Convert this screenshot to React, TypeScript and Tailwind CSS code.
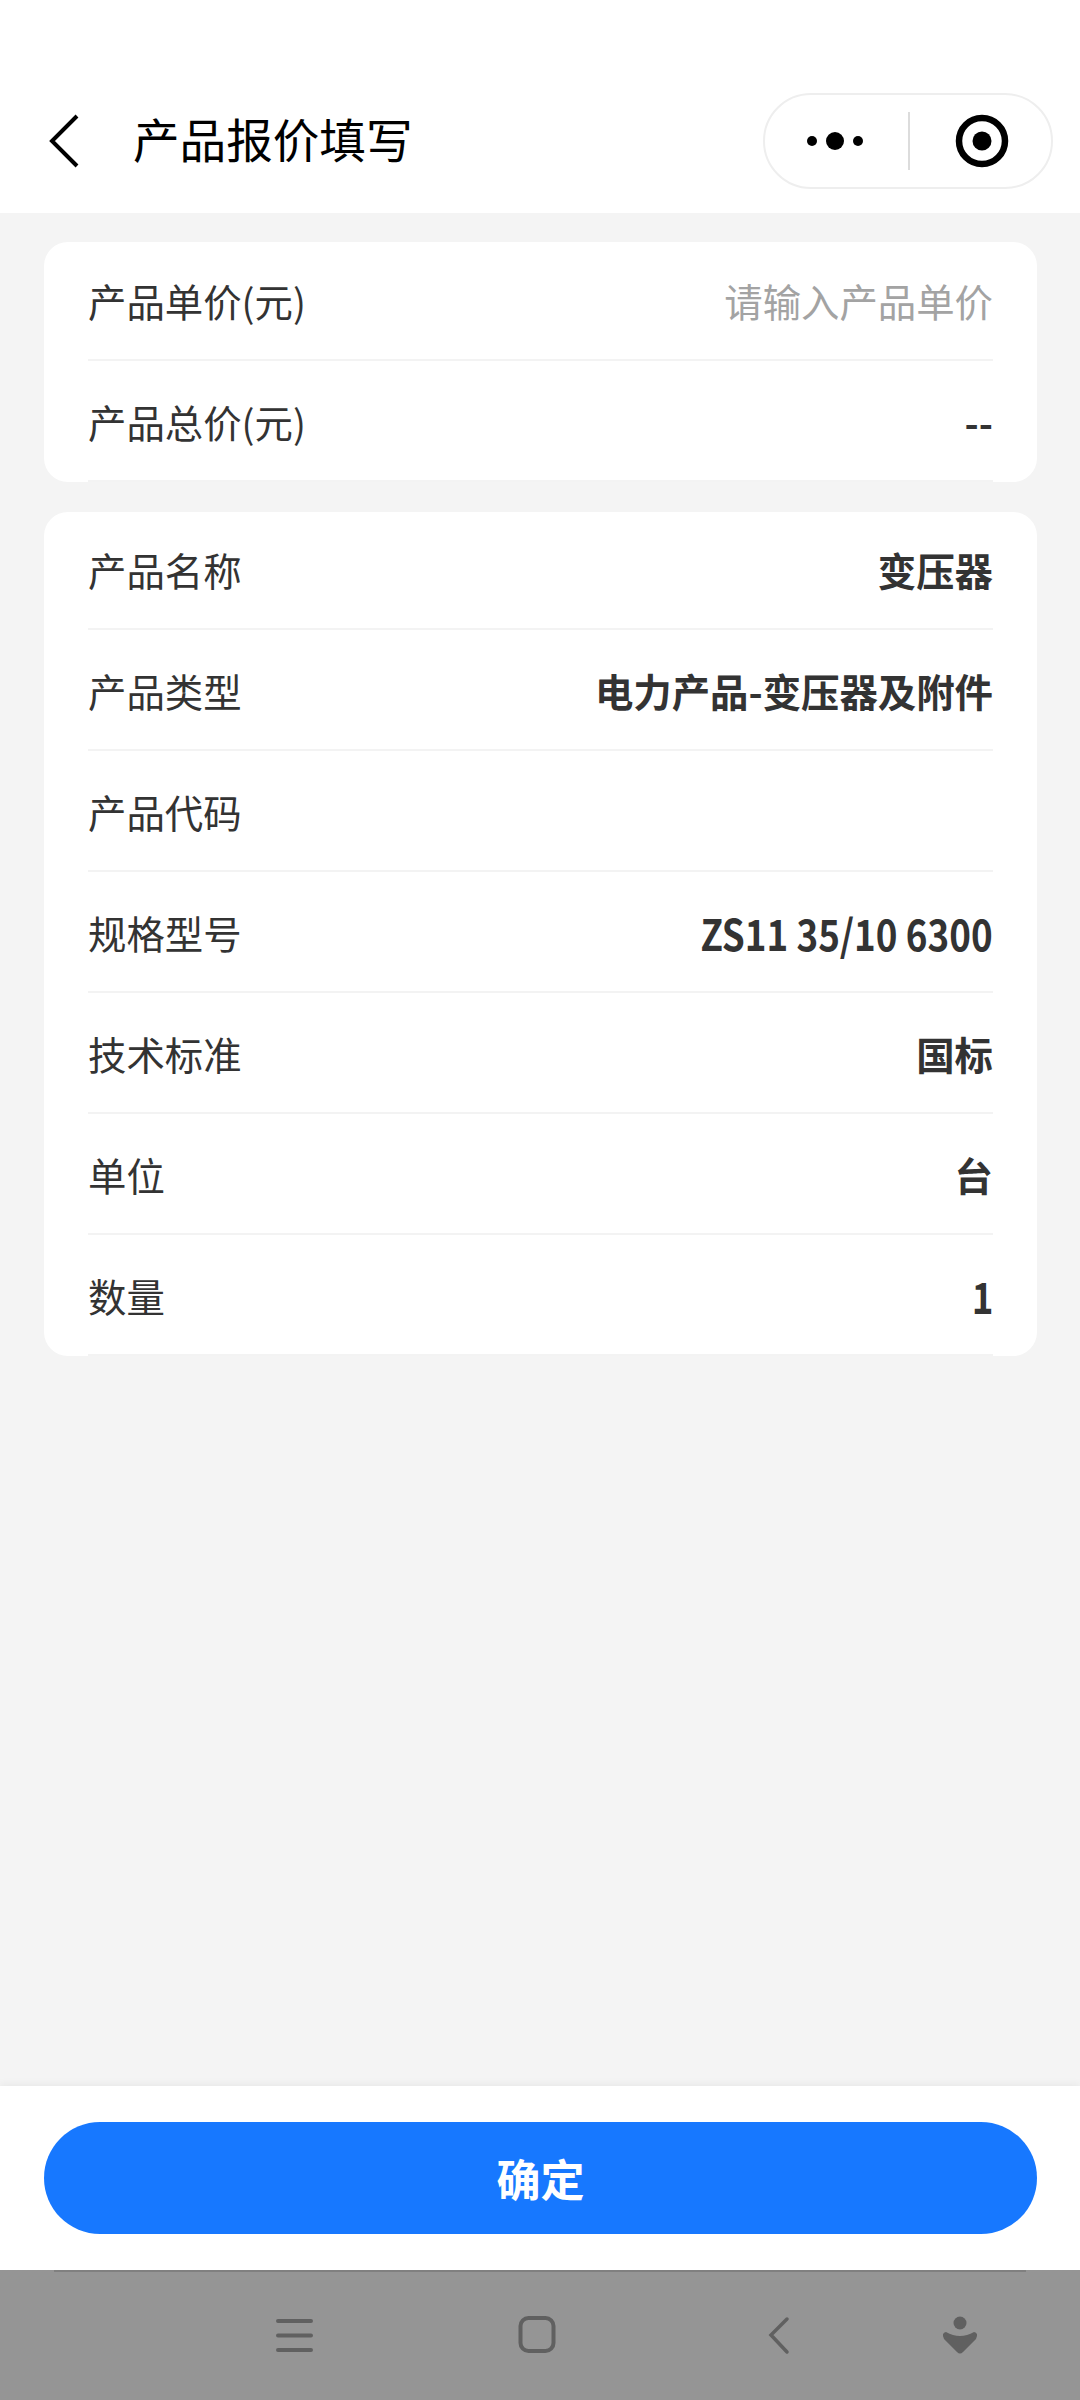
const font = { fontFamily: '"Noto Sans CJK SC", sans-serif' };

type RowProps = { label: string; value?: string; placeholder?: string; latin?: boolean };

function Row({ label, value, placeholder, latin }: RowProps) {
  return (
    <div className="flex items-end justify-between h-full border-b-2 border-[#f3f3f3] mx-[44px] pb-[40px] text-[38.4px] text-[#333333]">
      <span className="leading-[38px]">{label}</span>
      {placeholder ? (
        <span className="leading-[38px] text-[#a3a3a3]">{placeholder}</span>
      ) : latin ? (
        <span className="inline-block leading-[38px] font-bold text-[43px] origin-right scale-x-[0.855] whitespace-nowrap">
          {value}
        </span>
      ) : (
        <span className="leading-[38px] font-bold">{value}</span>
      )}
    </div>
  );
}

export default function App() {
  const first: RowProps[] = [
    { label: "产品单价(元)", placeholder: "请输入产品单价" },
    { label: "产品总价(元)", value: "--" },
  ];
  const second: RowProps[] = [
    { label: "产品名称", value: "变压器" },
    { label: "产品类型", value: "电力产品-变压器及附件" },
    { label: "产品代码", value: "" },
    { label: "规格型号", value: "ZS11 35/10 6300", latin: true },
    { label: "技术标准", value: "国标" },
    { label: "单位", value: "台" },
    { label: "数量", value: "1", latin: true },
  ];
  return (
    <div className="w-[1080px] h-[2400px] flex flex-col bg-[#f4f4f4] overflow-hidden" style={font}>
      <header className="h-[213px] shrink-0 bg-white flex items-start justify-between pt-[93px] pr-[27px] pl-[44px]">
        <div className="flex items-center h-[96px]">
          <svg width="36" height="56" viewBox="0 0 36 56" className="shrink-0">
            <path d="M33 3 L8 28 L33 53" fill="none" stroke="#000" strokeWidth="4" />
          </svg>
          <span className="ml-[53px] pb-[6px] text-[46.6px] text-black leading-none">产品报价填写</span>
        </div>
        <div className="w-[290px] h-[96px] rounded-full border-2 border-[#eeeeee] flex items-center">
          <svg width="143" height="40" viewBox="0 0 143 40" className="shrink-0">
            <circle cx="47" cy="20" r="5" fill="#000" />
            <circle cx="70" cy="20" r="9" fill="#000" />
            <circle cx="93" cy="20" r="5" fill="#000" />
          </svg>
          <div className="w-[2px] h-[58px] bg-[#dcdcdc] shrink-0" />
          <svg width="146" height="56" viewBox="0 0 146 56" className="shrink-0">
            <circle cx="72" cy="28" r="23" fill="none" stroke="#000" strokeWidth="6.5" />
            <circle cx="72" cy="28" r="9.5" fill="#000" />
          </svg>
        </div>
      </header>

      <main className="flex-1 pl-[44px] pr-[43px] pt-[29px] flex flex-col gap-[30px]">
        <section className="h-[240px] bg-white rounded-[24px] grid grid-rows-[119px_121px] overflow-hidden">
          {first.map((r) => (
            <Row key={r.label} {...r} />
          ))}
        </section>
        <section className="h-[844px] bg-white rounded-[24px] grid grid-rows-[118px_repeat(6,121px)] overflow-hidden">
          {second.map((r) => (
            <Row key={r.label} {...r} />
          ))}
        </section>
      </main>

      <footer className="h-[184px] shrink-0 bg-white pl-[44px] pr-[43px] pt-[36px] shadow-[0_-2px_8px_rgba(0,0,0,0.05)]">
        <button className="w-full h-[112px] rounded-full bg-[#1778ff] text-white text-[44px] font-bold leading-none">
          确定
        </button>
      </footer>

      <nav className="h-[130px] shrink-0 bg-[#959595] relative">
        <div className="h-[2px] mx-[54px] bg-[#808080]" />
        <div className="flex items-center h-[128px] -mt-[2px]">
          <svg width="1080" height="64" viewBox="0 0 1080 64" className="shrink-0">
            <g fill="none" stroke="#606060" strokeLinecap="round">
              <path d="M278 19 H311 M278 33.5 H311 M278 48 H311" strokeWidth="4" />
              <rect x="520.5" y="16" width="33" height="33" rx="8" strokeWidth="4" />
              <path d="M787 17 L771 33 L787 50" strokeWidth="3.5" />
            </g>
            <circle cx="960" cy="21" r="6.5" fill="#606060" />
            <path d="M946 30 Q960 38 974 30 Q979 31 976 37 L963 50 Q960 53 957 50 L944 37 Q941 31 946 30 Z" fill="#606060" />
          </svg>
        </div>
      </nav>
    </div>
  );
}
